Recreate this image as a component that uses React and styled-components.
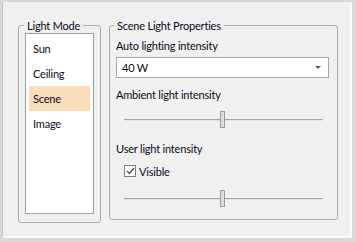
import React from "react";
import styled, { createGlobalStyle } from "styled-components";

const Global = createGlobalStyle`
  html, body { margin: 0; padding: 0; background: #d9d9d9; }
  body { font-family: Lato, "Noto Sans", sans-serif; font-size: 11px; letter-spacing: -0.2px; color: #0a0a1a; }
  * { box-sizing: border-box; }
`;

const Panel = styled.div`
  margin: 2px 4px 4px 2px;
  width: 350px;
  height: 236px;
  background: #f0f0f0;
  border-left: 1px solid #c2c2c2;
  border-right: 2px solid #f9f9f9;
  border-bottom: 2px solid #f9f9f9;
  padding: 17px 0 0 15px;
  display: flex;
  align-items: flex-start;
  gap: 8px;
`;

const Group = styled.fieldset`
  margin: 0;
  padding: 0;
  border: 1px solid #ababab;
  border-radius: 3px;
  width: ${(p) => p.$w}px;
  min-width: 0;
`;

const Legend = styled.legend`
  margin-left: ${(p) => p.$offset}px;
  padding: 0 3px;
  line-height: 13px;
  height: 13px;
  white-space: nowrap;
`;

const GroupBody = styled.div`
  padding: ${(p) => p.$pad};
  display: flex;
  flex-direction: column;
`;

const ListBox = styled.div`
  height: 181px;
  background: #fff;
  border: 1px solid #a0a0a0;
  padding: 2px 3px 0 3px;
  display: flex;
  flex-direction: column;
`;

const Item = styled.div`
  height: 25px;
  line-height: 25px;
  padding-left: 4px;
  background: ${(p) => (p.$selected ? "#f9dcb8" : "transparent")};
`;

const Label = styled.div`
  height: 14px;
  line-height: 14px;
  margin-top: ${(p) => p.$mt || 0}px;
  white-space: nowrap;
`;

const Select = styled.div`
  margin-top: 4px;
  width: 213px;
  height: 21px;
  background: #fff;
  border: 1px solid #a6a6a6;
  display: flex;
  align-items: center;
  justify-content: space-between;
  padding: 0 7px 0 5px;
`;

const Arrow = styled.span`
  width: 0;
  height: 0;
  border-left: 3px solid transparent;
  border-right: 3px solid transparent;
  border-top: 3px solid #5a5a5a;
`;

const SliderBox = styled.div`
  position: relative;
  margin: ${(p) => p.$mt}px 6px 0 8px;
  height: 17px;
`;

const Track = styled.div`
  position: absolute;
  left: 0;
  right: 0;
  top: 8px;
  height: 1px;
  background: #a2a2a2;
  box-shadow: 0 1px 0 #e4e4e4;
`;

const Thumb = styled.div`
  position: absolute;
  top: 0;
  width: 5px;
  height: 17px;
  background: #dedede;
  border: 1px solid #9c9c9c;
`;

const CheckRow = styled.label`
  margin: 8px 0 0 8px;
  height: 14px;
  display: flex;
  align-items: center;
  gap: 3px;
`;

const Box = styled.span`
  width: 12px;
  height: 12px;
  border: 1px solid #7c7c7c;
  background: #fff;
  display: flex;
  align-items: center;
  justify-content: center;
`;

function Slider({ mt, pos }) {
  return (
    <SliderBox $mt={mt}>
      <Track />
      <Thumb style={{ left: `${pos}px` }} />
    </SliderBox>
  );
}

export default function App() {
  const items = ["Sun", "Ceiling", "Scene", "Image"];
  return (
    <>
      <Global />
      <Panel>
        <Group $w={83}>
          <Legend $offset={5}>Light Mode</Legend>
          <GroupBody $pad="1px 6px 8px 6px">
            <ListBox>
              {items.map((it) => (
                <Item key={it} $selected={it === "Scene"}>
                  {it}
                </Item>
              ))}
            </ListBox>
          </GroupBody>
        </Group>
        <Group $w={229}>
          <Legend $offset={4}>Scene Light Properties</Legend>
          <GroupBody $pad="7px 8px 12px 6px">
            <Label>Auto lighting intensity</Label>
            <Select>
              <span>40 W</span>
              <Arrow />
            </Select>
            <Label $mt={10}>Ambient light intensity</Label>
            <Slider mt={9} pos={96} />
            <Label $mt={14}>User light intensity</Label>
            <CheckRow>
              <Box>
                <svg width="9" height="8" viewBox="0 0 9 8">
                  <polyline points="1,4 3.5,6.5 8,1" fill="none" stroke="#4a4a4a" strokeWidth="1.2" />
                </svg>
              </Box>
              <span>Visible</span>
            </CheckRow>
            <Slider mt={12} pos={96} />
          </GroupBody>
        </Group>
      </Panel>
    </>
  );
}
